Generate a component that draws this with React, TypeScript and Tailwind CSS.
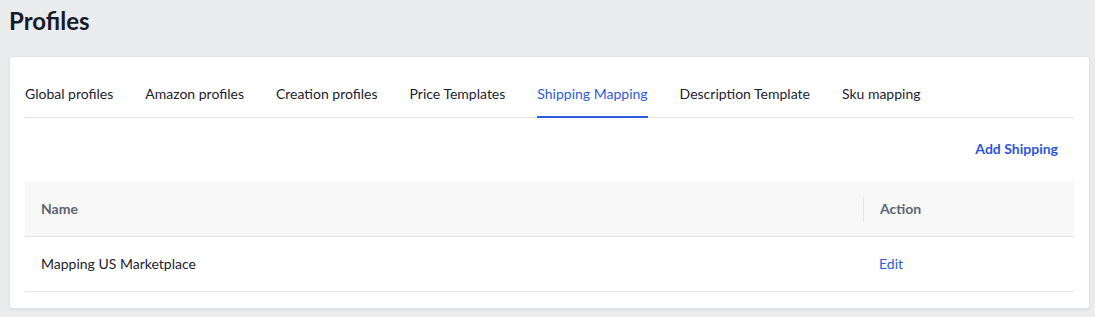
const tabs = [
  'Global profiles',
  'Amazon profiles',
  'Creation profiles',
  'Price Templates',
  'Shipping Mapping',
  'Description Template',
  'Sku mapping',
];

export default function App() {
  const active = 'Shipping Mapping';

  return (
    <div
      className="min-h-[317px] bg-[#ebecee] pt-[5px] pb-[9px]"
      style={{ fontFamily: 'Lato, "Open Sans", sans-serif' }}
    >
      <h1 className="ml-[9px] text-[24px] leading-[32px] font-bold text-[#161b2c]">Profiles</h1>

      <div className="mt-[19px] ml-[9px] mr-[5px] rounded-[3px] border border-[#e0e2e5] bg-white px-[15px] pt-[27px] pb-[16px] shadow-[0_1px_2px_rgba(0,0,0,0.08)]">
        {/* tabs */}
        <div className="flex gap-8 border-b border-[#e3e4e6]">
          {tabs.map((t) => (
            <div
              key={t}
              className={
                t === active
                  ? 'relative pb-[13px] text-[14px] leading-[20px] text-[#2c5ce0]'
                  : 'relative pb-[13px] text-[14px] leading-[20px] text-[#1c2230]'
              }
            >
              {t}
              {t === active && <div className="absolute left-0 right-0 -bottom-px h-[2px] bg-[#2c5ce0]" />}
            </div>
          ))}
        </div>

        <div className="flex justify-end pt-[21px] pb-[23px] pr-[16px]">
          <span className="text-[14px] leading-[20px] font-bold text-[#2c54e0]">Add Shipping</span>
        </div>

        {/* table */}
        <div className="text-[14px] leading-[20px]">
          <div className="flex h-[55px] items-center border-b border-[#e3e4e6] bg-[#f8f8f8] font-bold text-[#5b6574]">
            <div className="w-[838px] px-4">Name</div>
            <div className="flex h-[24px] flex-1 items-center border-l border-[#e5e6e8] px-4">Action</div>
          </div>
          <div className="flex h-[55px] items-center border-b border-[#e3e4e6] text-[#1c2230]">
            <div className="w-[838px] px-4">Mapping US Marketplace</div>
            <div className="flex-1 px-4 text-[#2c5ce0]">Edit</div>
          </div>
        </div>
      </div>
    </div>
  );
}
